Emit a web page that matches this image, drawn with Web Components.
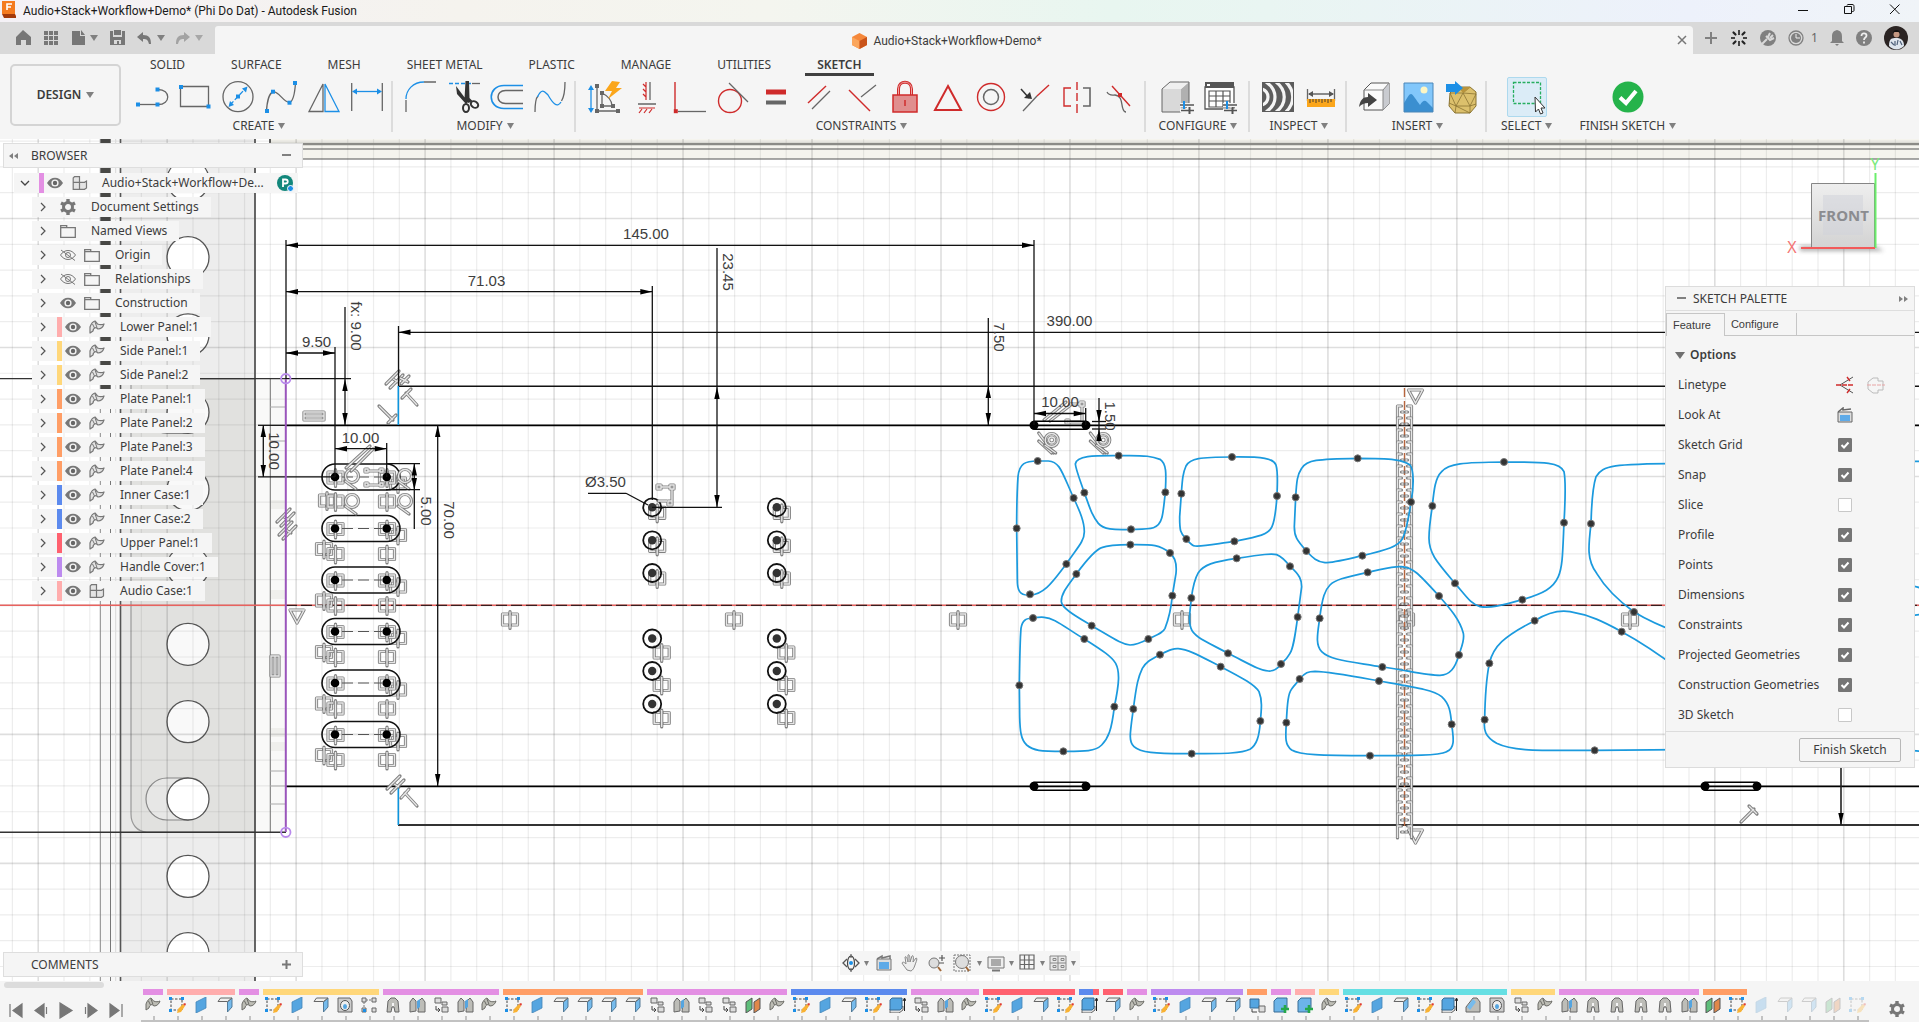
<!DOCTYPE html>
<html lang="en">
<head>
<meta charset="utf-8">
<title>Audio+Stack+Workflow+Demo* (Phi Do Dat) - Autodesk Fusion</title>
<style>
html,body{height:100%;margin:0}
body{font:12px/16px "Noto Sans","Open Sans",sans-serif;color:#3c3c3c;background:#f5f5f5;overflow:hidden}
</style>
</head>
<body>
<fusion-app></fusion-app>
<script>
const RESET = `*{box-sizing:border-box}
button{font:inherit;color:inherit;background:none;border:0;padding:0;margin:0;display:inline-flex;align-items:center;justify-content:center}
svg{display:block;flex:none;fill:none}
ul{list-style:none;margin:0;padding:0}`;

function define(name, css, html, after) {
  customElements.define(name, class extends HTMLElement {
    connectedCallback() {
      if (this.shadowRoot) return;
      const t = document.createElement('template');
      t.innerHTML = `<style>${RESET}${css}</style>` + (typeof html === 'function' ? html(this) : html);
      this.attachShadow({ mode: 'open' }).append(t.content.cloneNode(true));
      if (after) after(this.shadowRoot, this);
    }
  });
}
const svg = (w, h, inner, extra = '') => `<svg width="${w}" height="${h}" viewBox="0 0 ${w} ${h}" aria-hidden="true" ${extra}>${inner}</svg>`;
const CARET = svg(8, 6, '<path d="M0 0h8L4 6z" fill="#808080"/>');

/* ---------- ribbon icons, 32 x 32 ---------- */
const G = 'stroke="#666" stroke-width="1.3"', B = 'stroke="#1c8fe6" stroke-width="1.3"', R = 'stroke="#cf2b2b" stroke-width="1.4"';
const dot = (x, y, c = '#1c8fe6') => `<path d="M${x - 2} ${y - 2}h4v4h-4z" fill="${c}"/>`;
const SLIDERS = '<path d="M19 24h14M19 29.500h14" stroke="#f5f5f5" stroke-width="4"/><path d="M19 24h14M20 29.500h13" stroke="#555" stroke-width="1.500"/><path d="M23 20v8" stroke="#1c8fe6" stroke-width="2"/><path d="M28.500 26v7" stroke="#555" stroke-width="2"/>';
const TOOL = {
  line: `<path d="M1 23.500H22" ${G}/><path d="M22 8.500c13 0 13 15 0 15" ${G}/>${dot(2, 23.5)}${dot(21.5, 23.5)}${dot(21.5, 8.5)}`,
  rect: `<path d="M1.500 5.500h28v20h-28z" ${G}/>${dot(2, 6)}${dot(29.5, 25.5)}`,
  circle: `<circle cx="16" cy="15.700" r="15" ${G}/><path d="M8 24l15-16" ${B} stroke-dasharray="5 2"/><path d="M25.500 5.500l-1.500 6-4-4zM6.500 26l1.500-6 4 4z" fill="#1c8fe6"/>${dot(16, 15.5)}`,
  spline: `<path d="M1.500 30C2 22 4 12 8 11c5-2 10 10 16.500 10.500C29 20 30 10 30.500 1.500" ${G}/>${dot(2, 30)}${dot(8, 10.7)}${dot(24.5, 21.7)}${dot(30, 2)}`,
  mirror: `<path d="M15 3v27.500H1z" ${G}/><path d="M17 3v27.500h14z" ${B}/>`,
  dim: `<path d="M.7 2v28M31.300 2v28" ${G}/><path d="M3 10.500h26" ${B}/><path d="M1 10.500l5-3v6zM31 10.500l-5-3v6z" fill="#1c8fe6"/>`,
  fillet: `<path d="M1 19v12M19 1h12" ${G}/><path d="M1 18C1 9 8 1 19 1" ${B}/>`,
  trim: `<path d="M1 2.500h22" ${B} stroke-dasharray="4 2"/><path d="M24 2.500h8" ${G}/><path d="M17.500 0h3.500l.5 17 3 3-4 2-4-4zM8 5l12 16-2 2L9 13z" fill="#333"/><ellipse cx="18" cy="27" rx="3" ry="4" stroke="#333" stroke-width="2"/><ellipse cx="26.500" cy="23.500" rx="4" ry="3" transform="rotate(35 26.500 23.500)" stroke="#333" stroke-width="2"/>`,
  offset: `<path d="M32 4.500H13c-17 0-17 23 0 23h19" stroke="#1c8fe6" stroke-width="1.600"/><path d="M32 9.500H14.500c-10 0-10 13 0 13H32" stroke="#666" stroke-width="1.500"/>`,
  blend: `<path d="M1 31c0-9 1-14 3-16M27.500 20C30 16 31 10 31 1" ${G}/><path d="M3.500 16C8 6 11 11 14 14c4 7 9 14 13 7" ${B}/>`,
  auto: `<path d="M3 6v24" ${B}/><path d="M0 9l3-5 3 5zM0 27l3 5 3-5z" fill="#1c8fe6"/><path d="M9 5v25h21M14 25h10c0-5-2-9-10-13z" ${G}/>${dot(9, 5, '#666')}${dot(9, 30, '#666')}${dot(30, 30, '#666')}${dot(14, 12, '#666')}${dot(14, 25, '#666')}${dot(25, 25, '#666')}<path d="M24 0l8 1-4 6h6L20 18l4-8h-7z" fill="#fba61b"/>`,
  horiz: `<path d="M15 1v18M12 3l3 3M12 8l3 3M12 13l3 3M8 27h16M11 28l-3 4M16 28l-3 4M21 28l-3 4" stroke="#cf2b2b" stroke-width="1.200"/><path d="M19 1v18M7 23h18" ${G}/>`,
  perp: `<path d="M1 1v29" ${R}/><path d="M4 30.500h28" ${G}/>${dot(1.8, 30.2, '#cf2b2b')}`,
  tangent: `<circle cx="13" cy="20" r="11.500" ${R}/><path d="M12 2l19 19" ${G}/>`,
  equal: '<path d="M6 8.500h20v5H6z" fill="#cf2b2b"/><path d="M6 19.500h20v4H6z" fill="#666"/>',
  parallel: `<path d="M5 22L23 5" ${R}/><path d="M9 28L27 10" ${G}/>`,
  cross: `<path d="M3 9l21 21" ${R}/><path d="M15 16L30 4" ${G}/>`,
  lock: `<path d="M9.500 14V8c0-9 13-9 13 0v6" stroke="#cf2b2b" stroke-width="3"/><path d="M9.500 14V8c0-9 13-9 13 0v6" stroke="#f3a3a3" stroke-width="1"/><path d="M4 14h24v17H4z" fill="#e08e8e" stroke="#cf2b2b" stroke-width="1.500"/><path d="M16 19v6" stroke="#cf2b2b" stroke-width="1.500"/>`,
  triangle: '<path d="M16 5L29 29H3z" stroke="#cf2b2b" stroke-width="2"/>',
  concentric: `<circle cx="16" cy="16" r="13.500" ${R}/><circle cx="16" cy="16" r="7.500" stroke="#666" stroke-width="1.500"/>`,
  midpoint: `<path d="M5 30l14-15" ${G}/><path d="M19 15L31 4" ${R}/><path d="M3 8l8 9" stroke="#333" stroke-width="1.500"/><path d="M14 18l-8-1 6-6z" fill="#333"/>`,
  symmetry: `<path d="M10 7H3v18h7M16 1v31" ${R}/><path d="M16 9v3M16 20v3" stroke="#f5f5f5" stroke-width="3"/><path d="M22 7h7v18h-7" stroke="#666" stroke-width="1.600"/>`,
  curvature: `<path d="M8 5l18 20" ${R}/><path d="M3 11c2 4 5 3 8 3 8 1 6 10 8 14 1 3 2 3 3 3" ${G}/>${dot(16, 14, '#cf2b2b')}`,
  cube: `<path d="M1 8h19v23H1z" fill="#d9d9d9"/><path d="M20 8l8-7v23l-8 7z" fill="#b0b0b0"/><path d="M1 8h19l8-7H9z" fill="#efefef"/><path d="M1 8l8-7h19v23l-8 7H1z" stroke="#666"/>${SLIDERS}`,
  table: `<path d="M1 6h29v22H1z" fill="#fff" stroke="#555" stroke-width="1.300"/><path d="M1 1h29v6H1z" fill="#555"/><path d="M3 3h3v2H3z" fill="#fff"/><path d="M5 10h21v16H5zM5 15h21M5 20h21M12 10v16M19 10v16" stroke="#555" stroke-width="1.200"/>${SLIDERS}`,
  zebra: '<path d="M0 1h32v30H0z" fill="#5c5c5c"/><g stroke="#f5f5f5" stroke-width="3.200"><path d="M0 8c8 3 8 13 0 16"/><path d="M4 1c12 8 12 22 0 30"/><path d="M14 1c11 8 11 22 0 30"/><path d="M24 1c9 9 9 21 0 30"/></g><path d="M.5 1.500h31v29H.5z" stroke="#5c5c5c"/>',
  measure: `<path d="M2.500 8v12M29.500 8v12M4 13h24" ${G}/><path d="M3 13l5-3v6zM29 13l-5-3v6z" fill="#555"/><path d="M2 18h28v8H2z" fill="#fba61b"/><path d="M5 18v4M8 18v3M11 18v4M14 18v3M17 18v4M20 18v3M23 18v4M26 18v3" stroke="#333" stroke-width=".9"/>`,
  derive: `<path d="M5 9l7-7h18v21l-6 6H5z" fill="#fafafa" stroke="#555"/><path d="M24 9l6-7v21l-6 6z" fill="#c9cbd0"/><path d="M5 9h19v20M24 9l6-7" stroke="#888"/><path d="M0 26c1-7 4-10 9-10v-4l9 7-9 7v-4c-4 0-6 1-9 4z" fill="#444"/>`,
  image: '<path d="M2 2h29v29H2z" fill="#82c7fb"/><circle cx="22" cy="9" r="3.500" fill="#fdf6c4"/><path d="M2 22c4-6 5-9 7-9s5 6 9 11c3-5 5-5 7-3s4 4 6 6v4H2z" fill="#3b8fd0"/><path d="M2 2h29v29H2z" stroke="#4a86b8"/>',
  mesh: '<path d="M5 12l6-6h14l6 5v14l-6 7H10l-6-7z" fill="#dcc06c" stroke="#8a7433"/><path d="M5 12h13l7-6M18 12l13 1M5 12l6 13 7-13 7 13 6-12M4 22l7 3h14l6-2M11 25l-1 7M11 25l14 7M25 25v7" stroke="#8a7433" stroke-width=".8"/><path d="M13 6l5 6 8-6z" fill="#b8943c"/><path d="M1 3h9V0l8 7-8 7v-3H1z" fill="#1c8fe6"/>',
  select: '<path d="M2.500 1.500h27v21h-27z" stroke="#27ae60" stroke-width="1.300" stroke-dasharray="3 1.500"/><path d="M24 16l.5 15 3-3 2 5 2.500-1-2-5h4z" fill="#fff" stroke="#333"/>',
  finish: '<circle cx="16" cy="16" r="15.500" fill="#25b34b"/><path d="M8 16.500l6 5.500 10-12" stroke="#fff" stroke-width="4"/>'
};

/* ---------- window title ---------- */
define('title-bar', `:host{display:flex;height:22px;flex:none;align-items:flex-start;padding:0 17px 0 2px;background:linear-gradient(90deg,#f4f1f6,#f5f3ee 24%,#f4f5ef 40%,#e8f6f0 58%,#e9f5f2 66%,#edf1fb 88%,#f0f4f8);color:#1a1a1a;font-family:Roboto,sans-serif}
.name{flex:1;padding:3px 0 0 7px}.ctl{display:flex;gap:32px;padding-top:2px}.ctl button{width:14px;height:14px}`,
`${svg(14, 19, '<path d="M0 1h13v13H0z" fill="#f47b20"/><path d="M0 14h13l1 2v2H2z" fill="#a3390a"/><path d="M5 10V4h5M5 7h4" stroke="#fff" stroke-width="1.600"/>')}
<span class="name">Audio+Stack+Workflow+Demo* (Phi Do Dat) - Autodesk Fusion</span>
<span class="ctl"><button aria-label="Minimize">${svg(12, 12, '<path d="M1 7.500h10" stroke="#111"/>')}</button>
<button aria-label="Restore">${svg(12, 12, '<path d="M1.500 3.500h7v7h-7zM4 2.500c0-1 1-1 1-1h4c2 0 2 1 2 2v4c0 1-1 1-2 1" stroke="#111"/>')}</button>
<button aria-label="Close">${svg(12, 12, '<path d="M1 1.500l9.500 9.500M10.500 1.500L1 11" stroke="#111"/>')}</button></span>`);

/* ---------- quick access bar and document tab ---------- */
define('quick-bar', `:host{display:flex;height:32px;flex:none;background:#d9d9d9;padding-top:4px}
.l{width:215px;flex:none;display:flex;align-items:center;padding:0 8px 4px 15px;color:#808080}
.l button{margin-right:12px}.l .n{margin-right:4px}.l .c{margin-right:10px}.l .u{margin-right:5px}.dim{opacity:.55}
.tab{flex:1;background:#f5f5f5;border-radius:3px 4px 0 0;display:flex;align-items:center;padding:0 6px 0 2px}
.tab .t{flex:1;display:flex;justify-content:center;align-items:center;gap:6px;padding-top:2px;font-family:Roboto,sans-serif}
.r{width:226px;flex:none;display:flex;align-items:center;padding:0 12px 4px 11px;gap:12px;color:#666}
.cnt{display:flex;gap:7px;align-items:center}`,
`<div class="l"><button aria-label="Home">${svg(16, 16, '<path d="M8 0l8 7v8h-5v-5H6v5H1V7z" fill="#777"/>')}</button>
<button aria-label="Data panel">${svg(16, 16, '<path d="M1 1h4v4H1zM6 1h4v4H6zM11 1h4v4h-4zM1 6h4v4H1zM6 6h4v4H6zM11 6h4v4h-4zM1 11h4v4H1zM6 11h4v4H6zM11 11h4v4h-4z" fill="#777"/>')}</button>
<button class="n" aria-label="File">${svg(15, 16, '<path d="M1 1h8v5h5v9H1zM10 0l4 5h-4z" fill="#777"/>')}</button><button aria-label="File menu">${CARET}</button>
<button aria-label="Save">${svg(15, 16, '<path d="M0 1h3v6h9V1h3v14H0z" fill="#777"/><path d="M4 0h7v5H4zM3 9h9v6H3z" fill="#777"/><path d="M4 10h7v4H4z" fill="#d9d9d9"/><path d="M7 11h2v3H7z" fill="#777"/>')}</button>
<button class="u" aria-label="Undo">${svg(15, 12, '<path d="M6 0v3c6 0 8 3 8 9h-2c-1-4-2-5-6-5v3L0 5z" fill="#777"/>')}</button><button class="c" aria-label="Undo list">${CARET}</button>
<button class="u dim" aria-label="Redo">${svg(15, 12, '<path d="M9 0v3c-6 0-8 3-8 9h2c1-4 2-5 6-5v3l6-5z" fill="#777"/>')}</button><button class="n dim" aria-label="Redo list">${CARET}</button></div>
<div class="tab"><span class="t">${svg(15, 16, '<path d="M7.500 0L15 4v8l-7.500 4L0 12V4z" fill="#f5883b"/><path d="M0 4l7.500 4v8L0 12z" fill="#fba65c"/><path d="M7.500 8L15 4v8l-7.500 4z" fill="#c9541a"/>')}<span>Audio+Stack+Workflow+Demo*</span></span>
<button aria-label="Close tab">${svg(10, 10, '<path d="M1 1l8 8M9 1L1 9" stroke="#777" stroke-width="1.500"/>')}</button></div>
<div class="r"><button aria-label="New tab">${svg(14, 14, '<path d="M7 1v12M1 7h12" stroke="#808080" stroke-width="2"/>')}</button>
<button aria-label="Jobs">${svg(18, 18, '<path d="M9 1v5M9 12v5M1 9h4M13 9h4" stroke="#444" stroke-width="2"/><path d="M3.500 3.500l2 2M12.500 12.500l2 2M14.500 3.500l-2 2M5.500 12.500l-2 2" stroke="#222" stroke-width="2.200" stroke-linecap="round"/>')}</button>
<button aria-label="Extensions">${svg(16, 16, '<circle cx="8" cy="8" r="8" fill="#808080"/><path d="M2 14l5-5M6 6l4 4 4-2M10 3l-2 4M13 5l-3 3" stroke="#d9d9d9" stroke-width="2"/>')}</button>
<span class="cnt"><button aria-label="Job status">${svg(16, 16, '<circle cx="8" cy="8" r="7" stroke="#808080" stroke-width="1.300"/><circle cx="8" cy="8" r="5" fill="#808080"/><path d="M8 4v4h4" stroke="#eee"/>')}</button><span>1</span></span>
<button aria-label="Notifications">${svg(14, 16, '<path d="M7 0c4 1 5 3 5 7v4l2 2H0l2-2V7c0-4 1-6 5-7zM5 14h4l-2 2z" fill="#808080"/>')}</button>
<button aria-label="Help">${svg(16, 16, '<circle cx="8" cy="8" r="8" fill="#808080"/><path d="M5.500 6c0-4 5-3 5-.5C10.500 8 8 7 8 10M8 11.500v2" stroke="#eee" stroke-width="1.800"/>')}</button>
<button aria-label="Account">${svg(24, 24, '<circle cx="12" cy="12" r="12" fill="#2b2423"/><circle cx="12.500" cy="8.500" r="3" fill="#c49882"/><path d="M9 7c0-4 7-4 7 0l-1-1H10z" fill="#111"/><path d="M5 20c0-8 3-8 7-8s8 1 8 8c-5 5-11 4-15 0z" fill="#dfe6ee"/><path d="M7 16l3 3M16 15l2 4M11 15v5M14 14l-1 5" stroke="#50617a" stroke-width="1.200"/>')}</button></div>`);

/* ---------- ribbon ---------- */
define('tool-group', `:host{display:flex;flex-direction:column;align-items:center;padding:0 3px 0 6px;border-right:2px solid #dcdcdc;height:51px}
:host([wide]){padding:0 7px 0 9px}:host([open]){border-color:transparent;padding:0 12px}:host([active]){padding:0 13px 0 14px}
.row{display:flex}.row button{width:43px;height:32px}
:host([active]) .row button{background:#dbecf7;border:1px solid #add9ee;width:40px;height:40px;margin:-4px 1px;border-radius:2px}
.lab{display:flex;gap:4px;align-items:center;margin-top:5px;height:18px;white-space:nowrap}`,
el => `<div class="row">${el.getAttribute('tools').split(' ').map(t => `<button aria-label="${t}">${svg(32, 32, TOOL[t], 'overflow="visible"')}</button>`).join('')}</div>
<button class="lab"><slot></slot>${svg(7, 6, '<path d="M0 0h7L3.500 6z" fill="#808080"/>')}</button>`);

define('ribbon-bar', `:host{display:flex;height:85px;flex:none;background:#f5f5f5;padding-left:10px}
.design{width:111px;height:62px;margin-top:10px;border:2px solid #d4d4d4;border-radius:5px;font-weight:600;gap:5px}
.main{flex:1;min-width:0}.tabs{display:flex;gap:22px;padding-left:17px;height:23px}
.tabs button{padding:2px 12px 0;height:22px;border-bottom:3px solid transparent;white-space:nowrap}.tabs .on{font-weight:600;border-color:#404040}
.groups{display:flex;padding:4px 0 0 3px}`,
`<button class="design">DESIGN ${CARET}</button>
<div class="main"><nav class="tabs">${['SOLID', 'SURFACE', 'MESH', 'SHEET METAL', 'PLASTIC', 'MANAGE', 'UTILITIES', 'SKETCH'].map(t => `<button${t === 'SKETCH' ? ' class="on"' : ''}>${t}</button>`).join('')}</nav>
<div class="groups">
<tool-group tools="line rect circle spline mirror dim">CREATE</tool-group>
<tool-group tools="fillet trim offset blend">MODIFY</tool-group>
<tool-group tools="auto horiz perp tangent equal parallel cross lock triangle concentric midpoint symmetry curvature">CONSTRAINTS</tool-group>
<tool-group wide tools="cube table">CONFIGURE</tool-group>
<tool-group tools="zebra measure">INSPECT</tool-group>
<tool-group tools="derive image mesh">INSERT</tool-group>
<tool-group open active tools="select">SELECT</tool-group>
<tool-group open tools="finish">FINISH SKETCH</tool-group>
</div></div>`);

/* ---------- sketch drawing ---------- */
function drawing() {
  const o = [];
  const ln = (x1, y1, x2, y2, c = '#111', w = 1.3, e = '') => o.push(`<path d="M${x1} ${y1}L${x2} ${y2}" stroke="${c}" stroke-width="${w}" ${e}/>`);
  const box = (x, y, w, h, f) => o.push(`<path d="M${x} ${y}h${w}v${h}h${-w}z" fill="${f}"/>`);
  /* panel bodies behind the sketch */
  box(270, 139, 4000, 20, '#f5f4ee'); box(100, 139, 21, 860, '#f8f8f8'); box(121, 139, 134, 860, '#ededed');
  box(121, 379, 134, 453, '#e8e8e7'); box(255, 379, 31, 453, '#f9f9f8');
  o.push('<path d="M131 379h124v453H147c-10 0-16-8-16-18z" fill="#e1e1df" stroke="#999" stroke-width="1.200"/>');
  [500, 590, 728, 742].forEach(y => box(271, y, 14, 9, '#efefec'));
  [412.3, 799].forEach(y => o.push(`<path d="M188 ${y - 21}h-21a21 21 0 0 0 0 42h21z" fill="#e7e7e6" stroke="#888" stroke-width="1.200"/>`));
  for (let i = -6; i <= 4; i++) { const y = 644.3 + i * 77.35; o.push(`<circle cx="188" cy="${y}" r="21" fill="${y > 379 && y < 780 ? '#f9f9f9' : '#fff'}" stroke="#555" stroke-width="1.300"/>`); }
  box(100, 139, 11, 250, '#484845');
  /* grid, 5 divisions to a major line */
  for (let k = -1; k < 150; k++) { const x = 38.2 + k * 25.794, m = k % 5 === 0; ln(x, 139, x, 3000, m ? 'rgba(60,60,60,.17)' : 'rgba(60,60,60,.09)', m ? 1.6 : 1.2); }
  for (let k = -18; k < 90; k++) { const y = 605.4 + k * 25.794, m = k % 5 === 0; ln(0, y, 4000, y, m ? 'rgba(60,60,60,.17)' : 'rgba(60,60,60,.09)', m ? 1.6 : 1.2); }
  [[100.3, '#888', 1], [110.5, '#777', 1], [115.6, '#ddd', 1], [120.5, '#555', 1.6], [255, '#555', 1.8]].forEach(a => ln(a[0], 139, a[0], 2000, a[1], a[2]));
  ln(270.3, 379, 270.3, 832, '#777', 1); ln(270, 139, 270, 144);
  ln(270, 144, 4000, 144, '#8b8b87', 2.4); ln(270, 149, 4000, 149, '#555', 1.2); ln(270, 159, 4000, 159, '#555', 1.2);
  ln(0, 378.7, 286, 378.7, '#333'); ln(0, 832.3, 286, 832.3, '#333', 1.5);
  [407, 441, 771, 786, 804].forEach(y => ln(270, y, 286, y, '#aaa', 1));
  /* model edges */
  ln(0, 605.3, 4000, 605.3, '#e8625f', 1.4);
  ln(286, 605.3, 4000, 605.3, '#3b1d1d', 1.3, 'stroke-dasharray="11 4"');
  ln(398, 386.2, 4000, 386.2, '#111', 1.6); ln(286, 425.3, 4000, 425.3, '#000', 1.8);
  ln(286, 786.3, 4000, 786.3, '#000', 1.8); ln(398, 825, 4000, 825, '#333', 2);
  ln(398.3, 386, 398.3, 425, '#0e94dc', 1.6); ln(398.3, 786, 398.3, 825, '#0e94dc', 1.6);
  /* constraint glyphs: outline pass, then light core */
  const gl = (x, y, d) => o.push(`<path transform="translate(${x} ${y})" d="${d}" stroke="#6e6e6e" stroke-opacity=".88" stroke-width="3.200" stroke-linejoin="round" stroke-linecap="round"/><path transform="translate(${x} ${y})" d="${d}" stroke="#e6e6e6" stroke-width="1.400"/>`);
  const SYM = 'M-2-6H-7.500V5H-2M2-6H7.500V5H2M0-8.500V8.500', TRI = 'M-7-6H7L0 7z', PERP = 'M-8-8L6 6M1 9L9 1', PAR = 'M-9 5L4-8M-5 9L8-4M-2 0L3 3', TAN = 'M-6.500-5a6.500 6.500 0 1 0 13 0a6.500 6.500 0 1 0-13 0M-7 0L4 8';
  for (let r = 0; r < 6; r++) {
    const y = 477 + r * 51.5, d = r ? 0 : -1;
    gl(r ? 324 : 327, y + (r ? 21 : 24), SYM); gl(335.500, y + 26 + d, SYM); gl(387, y + 26 + d, SYM);
    gl(398, y + 7, SYM);
    gl(335.500, y + 1, SYM); gl(387, y + 1, SYM);
    o.push(`<rect x="322" y="${y - 13}" width="78" height="26" rx="13" stroke="#111" stroke-width="1.600"/><circle cx="335" cy="${y}" r="4.300" fill="#000"/><circle cx="386.700" cy="${y}" r="4.300" fill="#000"/>`);
    ln(342, y, 382, y, '#555', 1, 'stroke-dasharray="11 5"');
  }
  [[352, 481], [405, 481], [352, 506], [405, 506]].forEach(p => gl(p[0], p[1], TAN));
  gl(374, 477, 'M-9-8h3v3h-3zM6-8h3v3H6zM-6-6H6M-9 6h3v3h-3zM6 6h3v3H6zM-6 8H6'); gl(360, 458, 'M-14 10L10-12M-9 13L13-9');
  gl(286, 517, PAR); gl(288, 530, PAR); gl(395, 379, PAR); gl(404, 380, 'M-4-2L4 2M-3 4L5-4'); gl(410, 396, 'M7 9L-4-3M-8 2L1-7'); gl(387, 414, PERP);
  gl(396, 784, PAR); gl(405, 797, 'M12 9L0-4M-4 1L4-8'); gl(1749, 814, 'M-8 8L5-5M0-8L8 0');
  gl(314, 416, 'M-10 4H10V-4H-10zM-10 0H10'); gl(275, 666, 'M-4-10V10H4V-10zM0-10V10');
  gl(297, 616, TRI); gl(1415.500, 396, TRI); gl(1415.500, 836, TRI);
  [510, 734, 958, 1182, 1406, 1630].forEach(x => gl(x, 620, SYM));
  [652.2, 776.8].forEach(x => {
    [507.3, 540.3, 573].forEach(y => gl(x + 5, y + 6, SYM)); [638.5, 671, 704].forEach(y => gl(x + 9.5, y + 14.5, SYM));
    [507.3, 540.3, 573, 638.5, 671, 704].forEach(y => o.push(`<circle cx="${x}" cy="${y}" r="9" stroke="#111" stroke-width="1.800"/><circle cx="${x}" cy="${y}" r="4.200" fill="#333"/>`));
  });
  gl(664, 493, 'M-7-8h4v4h-4zM6-8h4v4H6zM-3-6H6M8-4V8M4 8h4v4H4zM-6 8H3');
  [1051.7, 1103.3].forEach(x => { gl(x, 441, 'M-13-8L2 12M-13 0L0 12'); gl(x, 445, TAN); gl(x, 441, 'M-3-1a3 3 0 1 0 6 0a3 3 0 1 0-6 0'); });
  gl(1058, 414, 'M-14 6L8-12M-8 7L14-10'); gl(1076, 410, 'M-10 10h3v3h-3zM4-8h4v4H4zM-6 12H6V-4M-6-6H4');
  /* stack of mirrored pairs along the centre line */
  ln(1404.500, 388, 1404.500, 826, '#b7653d', 1.4, 'stroke-dasharray="9 4"');
  for (let y = 411; y < 834; y += 12) gl(1404.500, y, 'M-3-5H-7V7M3-5H7V7M-3 1H-1M1 1H3');
  /* cut-out profiles, traced at three units to the pixel */
  const P = ['M173 483H205C240 485 245 515 281 594C300 635 313 665 313 695C313 725 290 745 259 792C225 835 195 885 150 885C118 888 112 870 112 840L110 685C110 600 112 560 114 530C118 490 135 483 173 483z',
    'M416 467C500 465 520 470 540 478C562 492 558 530 556 577C552 610 550 640 545 655C535 690 510 687 453 688C400 690 370 688 355 670C335 645 330 625 313 578C300 540 288 510 286 492C290 465 350 467 416 467z',
    'M756 471C850 470 880 475 888 495C895 520 892 545 891 588C888 630 885 660 876 680C865 705 835 710 763 724C700 733 670 740 645 738C635 737 630 730 619 717C600 700 599 690 599 650L604 581C607 540 608 520 618 498C630 475 660 471 756 471z',
    'M1133 475C1240 475 1270 480 1290 495C1302 510 1302 560 1293 606C1285 660 1280 690 1268 715C1255 740 1220 750 1147 767C1090 780 1060 788 1035 788C1010 785 1000 775 979 753C950 720 943 710 943 680L947 592C950 540 952 525 965 505C980 480 1010 477 1133 475z',
    'M451 734C520 733 540 735 570 759C590 775 590 800 588 820L577 887C572 940 565 960 555 985C548 1000 530 1005 505 1017C480 1030 465 1035 450 1035C425 1033 400 1015 335 977C290 950 245 925 244 905C243 880 265 855 289 822C320 780 345 750 365 743C385 735 420 734 451 734z',
    'M770 775C850 763 875 760 890 764C905 770 915 780 930 799C960 825 965 840 965 860L953 951C945 1010 940 1045 930 1060C922 1075 915 1082 903 1092C890 1110 880 1114 865 1113C840 1112 810 1093 744 1060C680 1025 640 1010 633 985C622 960 632 930 634 894C640 850 645 835 655 818C670 795 700 785 770 775z',
    'M1163 817C1220 805 1240 798 1265 800C1300 803 1315 820 1377 888C1410 925 1440 960 1450 1000C1455 1025 1440 1050 1437 1065C1425 1105 1410 1125 1380 1126C1340 1126 1290 1113 1207 1101C1100 1083 1050 1080 1025 1055C1005 1035 1013 1000 1019 955C1027 890 1035 870 1050 855C1065 840 1090 833 1163 817z',
    'M159 954C185 950 200 950 225 962C250 975 280 998 313 1017C370 1053 395 1070 407 1090C420 1115 418 1150 403 1220C395 1290 385 1315 365 1335C345 1355 310 1354 250 1354C180 1354 160 1352 140 1335C122 1318 120 1290 119 1250L118 1156C119 1080 120 1020 123 985C127 958 140 955 159 954z',
    'M540 1064C570 1050 580 1045 595 1046C625 1048 660 1068 722 1100C790 1135 825 1155 837 1175C847 1200 845 1225 841 1263C838 1310 830 1335 810 1348C785 1360 740 1361 635 1361C520 1362 480 1357 462 1340C445 1325 450 1300 460 1227C470 1150 475 1130 487 1105C500 1083 515 1078 540 1064z',
    'M959 1137C975 1118 985 1114 1005 1114C1050 1115 1100 1125 1197 1143C1310 1163 1360 1170 1385 1190C1410 1213 1412 1240 1415 1273C1422 1320 1424 1345 1400 1355C1375 1367 1300 1367 1170 1367C1020 1367 960 1365 935 1350C915 1335 916 1315 919 1268C922 1205 925 1180 935 1167C943 1155 950 1150 959 1137z',
    'M1572 486C1700 486 1740 488 1752 515C1758 545 1756 600 1752 668C1748 760 1748 800 1735 830C1720 865 1690 880 1627 899C1560 918 1530 925 1500 920C1470 910 1460 890 1425 850C1370 785 1347 760 1347 715C1347 690 1352 650 1357 618C1362 570 1365 535 1385 515C1405 490 1450 487 1572 486z',
    'M2100 1110C2040 1065 1990 1030 1925 995C1870 965 1830 945 1770 935C1740 930 1700 940 1664 962C1570 1010 1540 1040 1528 1090C1518 1140 1515 1200 1514 1259C1510 1290 1515 1310 1550 1330C1590 1350 1640 1353 1844 1351L2100 1349',
    'M2100 490C1900 492 1870 495 1848 530C1835 570 1835 620 1833 671C1825 740 1820 780 1850 820C1880 870 1920 905 1962 936C2010 965 2060 985 2100 1000',
    'M2800 484H2830M2800 858L2830 866M2800 946L2830 942M2800 1352L2830 1354'];
  const D = [173, 483, 281, 594, 259, 792, 150, 883, 110, 685, 416, 467, 556, 577, 453, 688, 313, 578, 756, 471, 891, 588, 763, 724, 619, 717, 604, 581, 1133, 475, 1293, 606, 1147, 767, 979, 753, 947, 592, 451, 734, 570, 759, 577, 887, 505, 1017, 335, 977, 289, 822, 770, 775, 930, 799, 953, 951, 903, 1092, 744, 1060, 634, 894, 1163, 817, 1377, 888, 1437, 1065, 1207, 1101, 1019, 955, 159, 954, 313, 1017, 403, 1220, 250, 1354, 118, 1156, 540, 1064, 722, 1100, 841, 1263, 635, 1361, 460, 1227, 959, 1137, 1197, 1143, 1415, 1273, 1170, 1367, 919, 1268, 1572, 486, 1752, 668, 1627, 899, 1425, 850, 1357, 618, 1664, 962, 1925, 995, 1844, 1351, 1514, 1259, 1528, 1090, 1833, 671, 1962, 936];
  o.push(`<g transform="translate(980 300) scale(.33333)"><path d="${P.join('')}" stroke="#1b9ade" stroke-width="5.200"/>`);
  for (let i = 0; i < D.length; i += 2) o.push(`<circle cx="${D[i]}" cy="${D[i + 1]}" r="10.500" fill="#333" stroke="#777" stroke-width="3"/>`);
  o.push('</g>');
  /* narrow slots */
  [[1034, 425.3], [1034, 786.3], [1705, 786.3]].forEach(([x, y]) => o.push(`<rect x="${x - 3}" y="${y - 4}" width="58" height="8" rx="4" stroke="#000" stroke-width="1.600"/><circle cx="${x}" cy="${y}" r="4.500" fill="#000"/><circle cx="${x + 52}" cy="${y}" r="4.500" fill="#000"/>`));
  /* dimensions */
  const ar = (x, y, a) => o.push(`<path transform="translate(${x} ${y}) rotate(${a})" d="M0 0L-12-2.700V2.700z" fill="#000"/>`);
  const tx = (x, y, s) => o.push(`<text x="${x}" y="${y + 5}">${s}</text>`), tv = (x, y, s) => o.push(`<text transform="translate(${x - 5} ${y}) rotate(90)">${s}</text>`);
  const h = (x1, x2, y) => { ln(x1, y, x2, y); ar(x1, y, 180); ar(x2, y, 0); };
  ln(286, 240, 286, 379); ln(1034, 240, 1034, 425); h(286, 1034, 245.3); tx(646, 234, '145.00');
  ln(652.3, 286, 652.3, 500); h(286, 652.3, 291.7); tx(486.500, 281, '71.03');
  ln(335, 347, 335, 477); h(286, 335, 353); tx(316.500, 342, '9.50');
  ln(398.5, 326, 398.5, 386); ln(398.5, 332.3, 4000, 332.3); ar(398.5, 332.3, 180); tx(1069.500, 321, '390.00');
  ln(386.7, 443, 386.7, 477); h(335, 386.7, 448.7); tx(360.500, 438, '10.00');
  ln(1085.7, 408, 1085.7, 425); h(1034, 1085.7, 413.5); tx(1060, 402, '10.00');
  ln(717, 248, 717, 507.3); ar(717, 387, -90); ar(717, 507, 90); ln(652, 507.3, 722, 507.3); tv(727.500, 272, '23.45');
  ln(345, 307, 345, 425); ar(345, 379, -90); ar(345, 425, 90); ln(286, 378.7, 351, 378.7); tv(356, 326, 'fx: 9.00');
  ln(263.3, 425, 263.3, 477); ar(263.3, 425, -90); ar(263.3, 477, 90); ln(258, 425.3, 286, 425.3); ln(258, 476.8, 335, 476.8); tv(274, 451, '10.00');
  ln(414.3, 463, 414.3, 529); ar(414.3, 463.6, -90); ar(414.3, 490, 90); ln(386, 463.6, 420, 463.6); ln(386, 489.6, 420, 489.6); tv(425.500, 511, '5.00');
  ln(437.7, 425, 437.7, 786); ar(437.7, 425, -90); ar(437.7, 786, 90); tv(449, 520, '70.00');
  ln(988.3, 318, 988.3, 425); ar(988.3, 386, -90); ar(988.3, 425, 90); tv(999, 337, '7.50');
  ln(1099, 398, 1099, 433); ar(1099, 422, 90); ar(1099, 429, -90); ln(1092, 421.5, 1106, 421.5); ln(1092, 429, 1106, 429); tv(1110, 416, '1.50');
  ln(588, 493.3, 626, 493.3); ln(626, 493.3, 648, 505); tx(605.500, 482, 'Ø3.50');
  ln(1841, 600, 1841, 825, '#222', 1.6); ar(1841, 825, 90);
  /* reference edge */
  ln(285.8, 379, 285.8, 832, '#9a55bb', 2);
  [378.7, 832.3].forEach(y => o.push(`<circle cx="285.800" cy="${y}" r="4.700" stroke="#b98aec" stroke-width="1.800"/>`));
  return o.join('');
}
define('sketch-canvas', `:host{display:block;position:relative;flex:1;min-height:0;overflow:hidden;background:#fff}
.draw{position:absolute;inset:0;width:100%;height:100%}
text{font:15px "Liberation Sans",Arial,sans-serif;fill:#3d3d3d;text-anchor:middle}
.cube{position:absolute;right:31px;top:10px}.cube .face{font:700 15px "Noto Sans",sans-serif;fill:#8b8c90}.cube .ax{font:16px "Noto Sans",sans-serif}
::slotted(*){position:absolute}`,
() => `<svg class="draw" role="img" aria-label="Sketch"><g transform="translate(0 -139)">${drawing()}</g></svg>
<svg class="cube" width="108" height="116" viewBox="0 -8 108 116"><defs><linearGradient id="c" x2="0" y2="1"><stop stop-color="#eee"/><stop offset="1" stop-color="#d3d3d3"/></linearGradient><filter id="f" x="-20%" width="140%" y="-200%" height="500%"><feGaussianBlur stdDeviation="2"/></filter></defs>
<path d="M20 89h75l9 5H20z" fill="#777" opacity=".6" filter="url(#f)"/><path d="M31.500 26.500h63v64h-63z" fill="url(#c)" stroke="#858585"/><path d="M43 38h40v40H43z" fill="#cfd1da" opacity=".5"/>
<text class="face" x="63.500" y="64">FRONT</text><path d="M95.500 16v75" stroke="#6bee6b" stroke-width="2"/><path d="M21 91h74" stroke="#f25a5a" stroke-width="2"/>
<text class="ax" x="12" y="96" style="fill:#f47474">X</text><text class="ax" x="95" y="13" style="fill:#7bea7b">Y</text></svg><slot></slot>`);

/* ---------- browser ---------- */
const EYE = svg(16, 12, '<path d="M0 6c4-7 12-7 16 0-4 7-12 7-16 0z" fill="#777"/><circle cx="8" cy="6" r="3.600" fill="#f5f5f5"/><circle cx="8" cy="6" r="2.200" fill="#666"/>');
const HID = svg(16, 12, '<path d="M.5 6c4-6 11-6 15 0-4 6-11 6-15 0zM1 1l14 10.500" stroke="#777"/><circle cx="8" cy="6" r="2.500" stroke="#777"/>');
const FOLDER = svg(16, 13, '<path d="M.7 2.700h14.600v9.600H.7zM.7 2.700V.7h6v2" stroke="#777" stroke-width="1.300"/>');
const WING = 'M1 13V7C2 4 4 1.500 6 1l2.500 3C11 5 13 5 15 4c-1 3-3 5-6 5L7 7.500C5 8 4 9.500 4 11z';
const PART = svg(16, 14, `<path d="${WING}" fill="#e4e4e4" stroke="#777" stroke-width="1.200" stroke-linejoin="round"/><path d="M3.500 4l2 4M6 2l2 5.500" stroke="#777"/>`);
const ASM = svg(16, 14, '<path d="M2.500.7h5v5.600H1.200V2zM1.200 6.300h6.300v7H1.200zM7.500 6.300h5L14.500 5v7l-2 1.300h-5z" stroke="#777" stroke-width="1.200" fill="#e4e4e4"/>');
const GEAR = svg(16, 16, '<g stroke="#777"><circle cx="8" cy="8" r="4.500" stroke-width="3"/><path d="M8 0v3M8 13v3M1 4l3 1.500M12 10.500l3 1.500M1 12l3-1.500M12 5.500L15 4" stroke-width="3.400"/></g>');
define('tree-row', `:host{display:block;height:24px}
.r{display:inline-flex;align-items:center;height:20px;background:#f5f5f5;margin-left:32px;padding:0 12px 0 8px;white-space:nowrap;vertical-align:top}
button{width:6px;height:12px}.bar{width:5px;height:20px;margin:0 3px 0 11px}.eye{width:16px;margin-left:14px;display:flex;justify-content:center}.bar+.eye{margin-left:0}
.ic{width:16px;margin-left:8px;display:flex;justify-content:center}.tx{margin-left:15px}
.set .ic{margin-left:14px}
.root{margin-left:14px;padding:0 4px 0 5px;width:284px}.root button{width:12px}.root .bar{margin-left:8px}.root .ic{margin-left:9px}.root .tx{margin-left:14px;flex:1}`,
el => { const k = el.getAttribute('kind'), c = el.getAttribute('color');
  return `<div class="r ${k === 'root' ? 'root' : k === 'gear' || k === 'views' ? 'set' : ''}"><button aria-label="Expand">${k === 'root' ? svg(12, 8, '<path d="M2 2l4 4 4-4" stroke="#444" stroke-width="1.300"/>') : svg(6, 10, '<path d="M1 1l4 4-4 4" stroke="#555" stroke-width="1.200"/>')}</button>
${c ? `<span class="bar" style="background:${c}"></span>` : ''}${k === 'gear' || k === 'views' ? '' : `<span class="eye">${k === 'hidden' ? HID : EYE}</span>`}
<span class="ic">${k === 'gear' ? GEAR : k === 'views' || k === 'hidden' || k === 'folder' ? FOLDER : k === 'part' ? PART : ASM}</span><span class="tx"><slot></slot></span>
${k === 'root' ? svg(17, 17, '<circle cx="8" cy="8" r="8" fill="#12877b"/><path d="M6 12V4.500h2.500c3 0 3 4 0 4H6" stroke="#fff" stroke-width="1.800"/><circle cx="13.500" cy="13.500" r="3" fill="#1c8fe6" stroke="#fff"/>') : ''}</div>`; });
define('browser-panel', `:host{left:3px;top:4px;width:300px}
header{display:flex;align-items:center;height:25px;border:1px solid #dedede;background:#f5f5f5;padding:0 11px 0 5px;margin-bottom:5px}
header span{flex:1;padding-left:13px}.tree{margin-left:-3px}`,
`<header><button aria-label="Collapse">${svg(9, 6, '<path d="M4 0v6L0 3zM9 0v6L5 3z" fill="#808080"/>')}</button><span>BROWSER</span><button aria-label="Minimize">${svg(9, 3, '<path d="M0 0h9v2H0z" fill="#808080"/>')}</button></header>
<div class="tree"><tree-row kind="root" color="#e38fe3">Audio+Stack+Workflow+De...</tree-row>
<tree-row kind="gear">Document Settings</tree-row><tree-row kind="views">Named Views</tree-row><tree-row kind="hidden">Origin</tree-row><tree-row kind="hidden">Relationships</tree-row><tree-row kind="folder">Construction</tree-row>
${[['#ffadad', 'Lower Panel:1'], ['#ffd77a', 'Side Panel:1'], ['#ffd77a', 'Side Panel:2'], ['#ff9e66', 'Plate Panel:1'], ['#ff9e66', 'Plate Panel:2'], ['#ff9e66', 'Plate Panel:3'], ['#ff9e66', 'Plate Panel:4'], ['#5c8aee', 'Inner Case:1'], ['#5c8aee', 'Inner Case:2'], ['#ff616f', 'Upper Panel:1'], ['#bd8bef', 'Handle Cover:1']].map(a => `<tree-row kind="part" color="${a[0]}">${a[1]}</tree-row>`).join('')}
<tree-row kind="asm" color="#ffadad">Audio Case:1</tree-row></div>`);

define('comments-bar', `:host{left:3px;bottom:4px;width:300px;height:25px;display:flex;align-items:center;justify-content:space-between;border:1px solid #dedede;background:#f5f5f5;padding:0 11px 0 27px}`,
`<span>COMMENTS</span><button aria-label="Add comment">${svg(9, 9, '<path d="M4.500 0v9M0 4.500h9" stroke="#777" stroke-width="2"/>')}</button>`);

/* ---------- sketch palette ---------- */
define('sketch-palette', `:host{right:4px;top:147px;width:250px;background:#f5f5f5;border:1px solid #dcdcdc}
header{display:flex;align-items:center;height:24px;border-bottom:1px solid #dedede;padding:0 6px 0 11px}header span{flex:1;padding-left:7px}
.tabs{display:flex;padding-top:2px;font:11px/16px "Liberation Sans",Arial,sans-serif;border-bottom:1px solid #c6c6c6}
.tabs button{height:22px;padding:0 17px 0 6px;border-right:1px solid #c6c6c6}.tabs .on{padding:0 13px 0 6px;border:1px solid #c6c6c6;border-bottom:0;height:23px;margin-bottom:-1px;background:#f5f5f5}
h3{font:600 12px/16px "Noto Sans",sans-serif;margin:0;padding:11px 0 7px 9px;display:flex;gap:5px;align-items:center}
.row{display:flex;align-items:center;height:30px;padding-left:12px}.row label,.row .k{width:160px;white-space:nowrap}
.row button{width:18px;height:18px;margin-right:13px}.row .k+button{margin-left:-2px}
input{appearance:none;margin:0;width:14px;height:14px;border:1px solid #c8c8c8;border-radius:1px;background:#fff}
input:checked{background:#757575 url("data:image/svg+xml,%3Csvg xmlns='http://www.w3.org/2000/svg' viewBox='0 0 12 12'%3E%3Cpath d='M2.500 6l2.500 2.500 4.500-5' fill='none' stroke='white' stroke-width='2'/%3E%3C/svg%3E");border-color:#757575}
footer{border-top:1px solid #dcdcdc;height:36px;display:flex;align-items:center;justify-content:flex-end;padding-right:13px;margin-top:1px}
footer button{width:102px;height:24px;border:1px solid #b8b8b8;border-radius:2px}`,
`<header><button aria-label="Minimize">${svg(9, 3, '<path d="M0 0h9v2H0z" fill="#808080"/>')}</button><span>SKETCH PALETTE</span><button aria-label="Expand">${svg(9, 6, '<path d="M0 0v6l4-3zM5 0v6l4-3z" fill="#808080"/>')}</button></header>
<div class="tabs"><button class="on">Feature</button><button>Configure</button></div>
<h3>${svg(10, 7, '<path d="M0 0h10L5 7z" fill="#707070"/>')}Options</h3>
<div class="row"><span class="k">Linetype</span><button aria-label="Construction">${svg(18, 18, '<path d="M17 1L4 9l13 8" stroke="#555"/><path d="M0 9h18" stroke="#d02b2b" stroke-width="1.300" stroke-dasharray="5 1"/><path d="M11 1l3 4M11 17l3-4" stroke="#d02b2b" stroke-width="1.400"/>')}</button><button aria-label="Centerline">${svg(18, 18, '<path d="M11 2H6L1 6v7l5 4h5v-3h5V5h-5z" stroke="#bbb"/><path d="M0 9h18" stroke="#e8a5a5" stroke-dasharray="4 1"/>')}</button></div>
<div class="row"><span class="k">Look At</span><button aria-label="Look At">${svg(16, 16, '<path d="M1 5h14v10H1z" fill="#ddd" stroke="#666"/><path d="M3 8h10v6H3z" fill="#5eaae8"/><path d="M1 5l5-4v2l8-1" stroke="#666" stroke-width="1.500"/>')}</button></div>
${[['Sketch Grid', 1], ['Snap', 1], ['Slice', 0], ['Profile', 1], ['Points', 1], ['Dimensions', 1], ['Constraints', 1], ['Projected Geometries', 1], ['Construction Geometries', 1], ['3D Sketch', 0]].map((a, i) => `<div class="row"><label for="o${i}">${a[0]}</label><input type="checkbox" id="o${i}"${a[1] ? ' checked' : ''}></div>`).join('')}
<footer><button>Finish Sketch</button></footer>`);

/* ---------- navigation bar ---------- */
const NC = `<button aria-label="Options">${svg(5, 5, '<path d="M0 0h5L2.500 5z" fill="#808080"/>')}</button>`;
const nb = (n, i, c = '') => `<button class="${c}" aria-label="${n}">${svg(18, 18, i)}</button>`;
define('nav-bar', `:host{left:50%;transform:translateX(-50%);bottom:6px;height:24px;width:240px;background:#f5f5f5;display:flex;align-items:center;justify-content:space-between;padding:0 3px 0 2px}
.s{margin:0 2px}`,
`${nb('Orbit', '<path d="M9 0v4M9 14v4" stroke="#444"/><ellipse cx="9" cy="9" rx="3.500" ry="7" stroke="#444" stroke-width="1.200"/><path d="M5 5L1 9l4 4M13 5l4 4-4 4" stroke="#555" stroke-width="1.300"/><circle cx="9" cy="9" r="2" fill="#1c8fe6"/>')}${NC}
${nb('Look at', '<path d="M2 5h14v11H2z" fill="#ddd" stroke="#777"/><path d="M4 8h10v7H4z" fill="#5eaae8"/><path d="M2 5l5-3v2l8-2v3" stroke="#777" stroke-width="1.500"/>', 's')}
${nb('Pan', '<path d="M6 16C4 13 2 11 1 9c1-2 3 0 4 1L4 3c1-1 2 0 3 5V1c1-1 2 0 2 7l2-6c1-1 2 0 1 6l3-4c2 0 0 4-1 7-1 3-2 5-4 6z" fill="#eee" stroke="#888"/>', 's')}
${nb('Zoom', '<circle cx="7" cy="9" r="5" fill="#ddd" stroke="#777"/><path d="M11 13l3 4" stroke="#a0693a" stroke-width="2"/><path d="M15 1v6M12 4h6M12 9h5" stroke="#555" stroke-width="1.200"/>', 's')}
${nb('Fit', '<path d="M1 1h16v16H1z" stroke="#777" stroke-dasharray="2 1"/><circle cx="9" cy="8" r="6.500" fill="#ddd" stroke="#777"/><path d="M13 13l3 4" stroke="#a0693a" stroke-width="2"/>', 's')}${NC}
${nb('Display', '<path d="M1 3h16v11H1z" fill="#eee" stroke="#777"/><path d="M4 5h10v7H4z" fill="#aaa"/><path d="M5 16.500h8" stroke="#777" stroke-width="2"/>')}${NC}
${nb('Grid', '<path d="M2 1h14v14H2zM2 6h14M2 10.500h14M6.500 1v14M11 1v14" stroke="#666" stroke-width="1.200"/>')}${NC}
${nb('Viewports', '<path d="M1 2h16v14H1zM9 2v14M1 9h16" stroke="#888" fill="#e8e8e8"/><path d="M4 4.500h3v2H4zM12 4.500h3v2h-3zM4 11.500h3v2H4zM12 11.500h3v2h-3z" stroke="#888"/>')}${NC}`);

/* ---------- timeline ---------- */
const FEAT = {
  C: `<path d="${WING}" fill="#bdbdb5" stroke="#6b6b66" stroke-linejoin="round"/><path d="M3.500 4l2 4M6 2l2 5.500" stroke="#6b6b66"/>`,
  S: '<path d="M2 2h11v11H2z" stroke="#444" stroke-dasharray="2.500 1.500"/><path d="M0 0h3v3H0zM12 0h3v3h-3zM0 12h3v3H0z" fill="#1c8fe6"/><path d="M14 7L9 12l-1 4 4-1 4-6z" fill="#f9b233"/><path d="M14 7l2 2 1-2-1-1z" fill="#e03c31"/>',
  P: '<path d="M3 5l10-5v11L3 16z" fill="#55a5e0" stroke="#4587b8" stroke-width=".8"/>',
  F: '<path d="M10.500 5L15 1v9l-4.500 5z" fill="#76bbec" stroke="#47718f" stroke-width=".9"/><path d="M1 4.500L3.500 1H15l-4.500 3.500z" fill="#f0f0ee" stroke="#666"/>',
  H: '<path d="M1 1h12l2 3v11H1z" fill="#ccc" stroke="#666"/><ellipse cx="8" cy="8.500" rx="4.500" ry="5" fill="#eee" stroke="#555"/><ellipse cx="8" cy="9.500" rx="2" ry="2.500" fill="#55a5e0"/>',
  A: '<path d="M1 1h4v4H1zM11 1h4v4h-4zM11 11h4v4h-4zM1 11h4v4H1z" fill="#ddd" stroke="#666"/><path d="M5 3h6M3 5v6" stroke="#777" stroke-dasharray="2 1"/><path d="M2 12h3v3H2z" fill="#1c8fe6"/>',
  M: '<path d="M2 15l1-11 3-3h4l3 3 1 11h-4l-1-5H7l-1 5z" fill="#bdbdb8" stroke="#666"/><path d="M7 6h2v3H7z" fill="#f5f5f5"/>',
  J: '<path d="M1 15V5l3-4 3 3v10zM9 15l1-11 3-3 3 4v10z" fill="#bdbdb8" stroke="#666"/><path d="M8 4l3-2v8l-3 2z" fill="#55a5e0"/>',
  X: '<path d="M2 1h6v5H2zM9 10h6v5H9zM9 5h5v3H9z" fill="#ddd" stroke="#666"/><path d="M3 9v4h4M5 11l2 2-2 2" stroke="#444"/>',
  G: '<path d="M1 5l6-4v11l-6 4z" fill="#5fbf7b" stroke="#555"/><path d="M9 5l6-4v11l-6 4z" fill="#e0884a" stroke="#555"/>',
  E: '<path d="M1 12h9l4-3v4l-4 3H1z" fill="#ddd" stroke="#666"/><path d="M1 3l2-2h10v10l-2 2H1z" fill="#55a5e0" stroke="#396d96"/><path d="M15.500 14V2M14 4l1.500-3L17 4" stroke="#222"/>',
  B: '<path d="M1 2h9v9H1z" fill="#55a5e0" stroke="#396d96"/><path d="M10 9h6v6h-6z" fill="#ddd" stroke="#666"/><path d="M3 12v3h5" stroke="#444"/>',
  N: '<path d="M1 4l3-3h10v10l-3 4H1z" fill="#6cb4e8" stroke="#396d96"/><path d="M12 8v8M8 12h8" stroke="#25a84a" stroke-width="2.600"/>',
  K: '<path d="M1 10l7-9h4l3 4v10H1z" fill="#bdbdb8" stroke="#666"/><path d="M2 10l6-8 3 3-6 8z" fill="#76bbec"/>'
};
const PK = '#e38fe3', SA = '#ffadad', YE = '#ffd77a', OR = '#ff9e66', BL = '#5c8aee', RE = '#ff616f', PU = '#bd8bef', CY = '#66dfe3';
const GROUPS = [[PK, 'C'], [SA, 'SPF'], [PK, 'C'], [YE, 'SPFHA'], [PK, 'MJXJC'], [OR, 'SPFFFF'], [PK, 'XJXXGC'], [BL, 'SPFSE'], [PK, 'XJC'], [RE, 'SPFS'], [`linear-gradient(90deg,${BL} 70%,${RE} 70%)`, 'E'], [RE, 'F'], [PK, 'C'], [PU, 'SPFF'], [OR, 'B'], [PK, 'N'], [SA, 'N'], [YE, 'C'], [CY, 'SPFSEKH'], [YE, 'XC'], [PK, 'JMMMMJ'], [OR, 'GS'], ['transparent', 'PFFGS']];
define('time-line', `:host{display:flex;flex:none;height:41px;background:#f5f5f5}
.scroll{height:6px;width:100px;border-radius:3px;background:#dcdcdc;margin:1px 0 0 4px}
.ctl{width:141px;flex:none}.btns{display:flex;gap:9px;padding:13px 0 0 8px}.btns button{width:16px;height:18px}
.track{flex:1;min-width:0;display:flex;padding-top:8px;overflow:hidden}
.bar{height:6px;margin:0 2px}.cells{display:flex;padding-top:1px;height:27px;border-bottom:2px solid #c2c2c2}
.cells button{width:24px;height:18px;position:relative}.cells button::after{content:"";position:absolute;left:12px;top:20px;width:2px;height:5px;background:#c2c2c2}
.off button svg{opacity:.28}.gear{width:44px;padding:20px 0 0;flex:none}.gear button{width:44px}`,
`<div class="ctl"><div class="scroll"></div><div class="btns">${[['First', 'M2 2v13M14 2v13L5 8.500z'], ['Previous', 'M11 2v13L2 8.500zM13.500 5v7'], ['Play', 'M2 1v15l12-7.500z'], ['Next', 'M5 2v13l9-6.500zM2.500 5v7'], ['Last', 'M2 2v13l9-6.500zM14 2v13']].map(b => `<button aria-label="${b[0]}">${svg(16, 17, `<path d="${b[1]}" fill="#777" stroke="#777" stroke-width="1.200"/>`)}</button>`).join('')}</div></div>
<div class="track">${GROUPS.map(g => `<div class="${g[0] === 'transparent' ? 'off' : ''}"><div class="bar" style="background:${g[0]}"></div><div class="cells">${[...g[1]].map(c => `<button aria-label="Feature">${svg(17, 16, FEAT[c])}</button>`).join('')}</div></div>`).join('')}</div>
<div class="gear"><button aria-label="Settings">${svg(16, 16, '<g stroke="#777"><circle cx="8" cy="8" r="4.500" stroke-width="3"/><path d="M8 0v3M8 13v3M1 4l3 1.500M12 10.500l3 1.500M1 12l3-1.500M12 5.500L15 4" stroke-width="3.400"/></g>')}</button></div>`);

define('fusion-app', `:host{display:flex;flex-direction:column;height:100vh;overflow:hidden}`,
`<title-bar></title-bar><quick-bar></quick-bar><ribbon-bar></ribbon-bar>
<sketch-canvas><browser-panel></browser-panel><comments-bar></comments-bar><sketch-palette></sketch-palette><nav-bar></nav-bar></sketch-canvas>
<time-line></time-line>`);
</script>
</body>
</html>
